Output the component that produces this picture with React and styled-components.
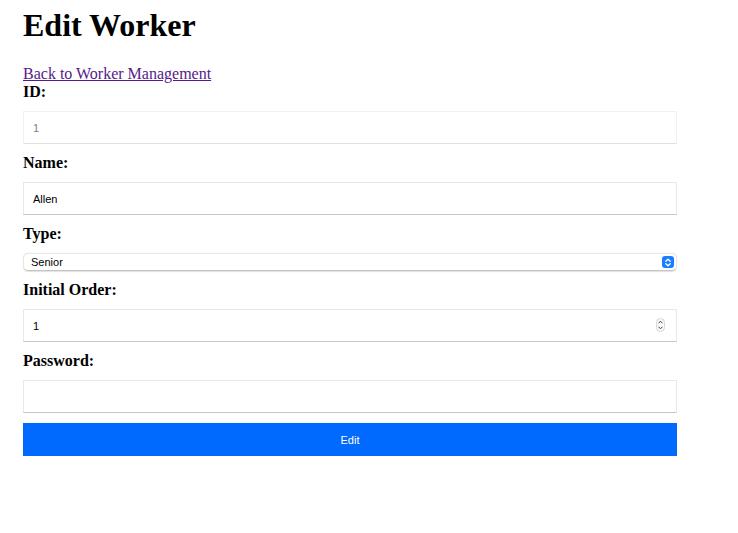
import React from "react";
import styled, { createGlobalStyle } from "styled-components";

const Global = createGlobalStyle`
  html, body { margin: 0; padding: 0; background: #fff; }
  body { margin: 8px; font-family: "Liberation Serif", "Times New Roman", serif; font-size: 16px; color: #000; }
`;

const Page = styled.div`
  padding: 0 15px;
  width: 654px;
`;

const Title = styled.h1`
  font-size: 32px;
  font-weight: bold;
  margin: 0 0 22px;
  line-height: 35px;
`;

const BackLink = styled.a`
  color: #551a8b;
  text-decoration: underline;
  display: inline-block;
  line-height: 18px;
`;

const Form = styled.form`
  display: flex;
  flex-direction: column;
`;

const Label = styled.label`
  display: block;
  font-weight: bold;
  line-height: 18px;
  margin-top: ${(p) => (p.$first ? "0" : "10px")};
`;

const Field = styled.div`
  position: relative;
  margin-top: 10px;
`;

const Input = styled.input`
  display: block;
  box-sizing: border-box;
  width: 654px;
  height: 33px;
  padding: 0 9px;
  margin: 0;
  font-family: "Liberation Sans", Arial, sans-serif;
  font-size: 11px;
  color: ${(p) => (p.disabled ? "#7d7d7d" : "#000")};
  -webkit-text-fill-color: ${(p) => (p.disabled ? "#7d7d7d" : "#000")};
  background: #fff;
  border: 1px solid;
  border-color: ${(p) =>
    p.disabled ? "#f1f1f1 #f1f1f1 #e0e0e0" : "#e8e8e8 #e8e8e8 #c6c6c6"};
  border-radius: 0;
  outline: none;
`;

const Select = styled.select`
  display: block;
  box-sizing: border-box;
  width: 654px;
  height: 18px;
  padding: 0 0 0 7px;
  margin: 0;
  appearance: none;
  -webkit-appearance: none;
  font-family: "Liberation Sans", Arial, sans-serif;
  font-size: 11px;
  line-height: 16px;
  color: #000;
  background: #fff;
  border: 1px solid;
  border-color: #e6e6e6 #e6e6e6 #c4c4c4;
  border-radius: 5px;
  box-shadow: 0 0.5px 1px rgba(0, 0, 0, 0.12);
  outline: none;
`;

const SelectKnob = styled.span`
  position: absolute;
  right: 3px;
  top: 3px;
  width: 12px;
  height: 12px;
  border-radius: 3px;
  background: #1a7cff;
  display: flex;
  align-items: center;
  justify-content: center;
  pointer-events: none;
`;

const Stepper = styled.span`
  position: absolute;
  right: 12px;
  top: 9px;
  width: 9px;
  height: 14px;
  border: 1px solid #d6d6d6;
  border-radius: 5px;
  box-sizing: border-box;
  display: flex;
  flex-direction: column;
  align-items: center;
  justify-content: space-around;
  background: #fafafa;
  pointer-events: none;
`;

const Button = styled.button`
  display: block;
  margin-top: 10px;
  width: 654px;
  height: 33px;
  border: none;
  border-radius: 0;
  background: #006aff;
  color: #fff;
  font-family: "Liberation Sans", Arial, sans-serif;
  font-size: 11px;
  padding: 0;
`;

export default function App() {
  return (
    <>
      <Global />
      <Page>
        <Title>Edit Worker</Title>
        <BackLink href="#">Back to Worker Management</BackLink>
        <Form onSubmit={(e) => e.preventDefault()}>
          <Label $first>ID:</Label>
          <Field>
            <Input disabled value="1" readOnly />
          </Field>
          <Label>Name:</Label>
          <Field>
            <Input defaultValue="Allen" />
          </Field>
          <Label>Type:</Label>
          <Field>
            <Select defaultValue="Senior">
              <option>Senior</option>
              <option>Junior</option>
            </Select>
            <SelectKnob>
              <svg width="8" height="9" viewBox="0 0 8 9" fill="none" stroke="#fff" strokeWidth="1.4" strokeLinecap="round" strokeLinejoin="round">
                <path d="M1.8 3.2 L4 1.2 L6.2 3.2" />
                <path d="M1.8 5.8 L4 7.8 L6.2 5.8" />
              </svg>
            </SelectKnob>
          </Field>
          <Label>Initial Order:</Label>
          <Field>
            <Input defaultValue="1" />
            <Stepper>
              <svg width="5" height="4" viewBox="0 0 5 4" fill="none" stroke="#444" strokeWidth="1" strokeLinecap="round">
                <path d="M0.8 3 L2.5 1.2 L4.2 3" />
              </svg>
              <svg width="5" height="4" viewBox="0 0 5 4" fill="none" stroke="#444" strokeWidth="1" strokeLinecap="round">
                <path d="M0.8 1 L2.5 2.8 L4.2 1" />
              </svg>
            </Stepper>
          </Field>
          <Label>Password:</Label>
          <Field>
            <Input type="password" />
          </Field>
          <Button type="submit">Edit</Button>
        </Form>
      </Page>
    </>
  );
}
